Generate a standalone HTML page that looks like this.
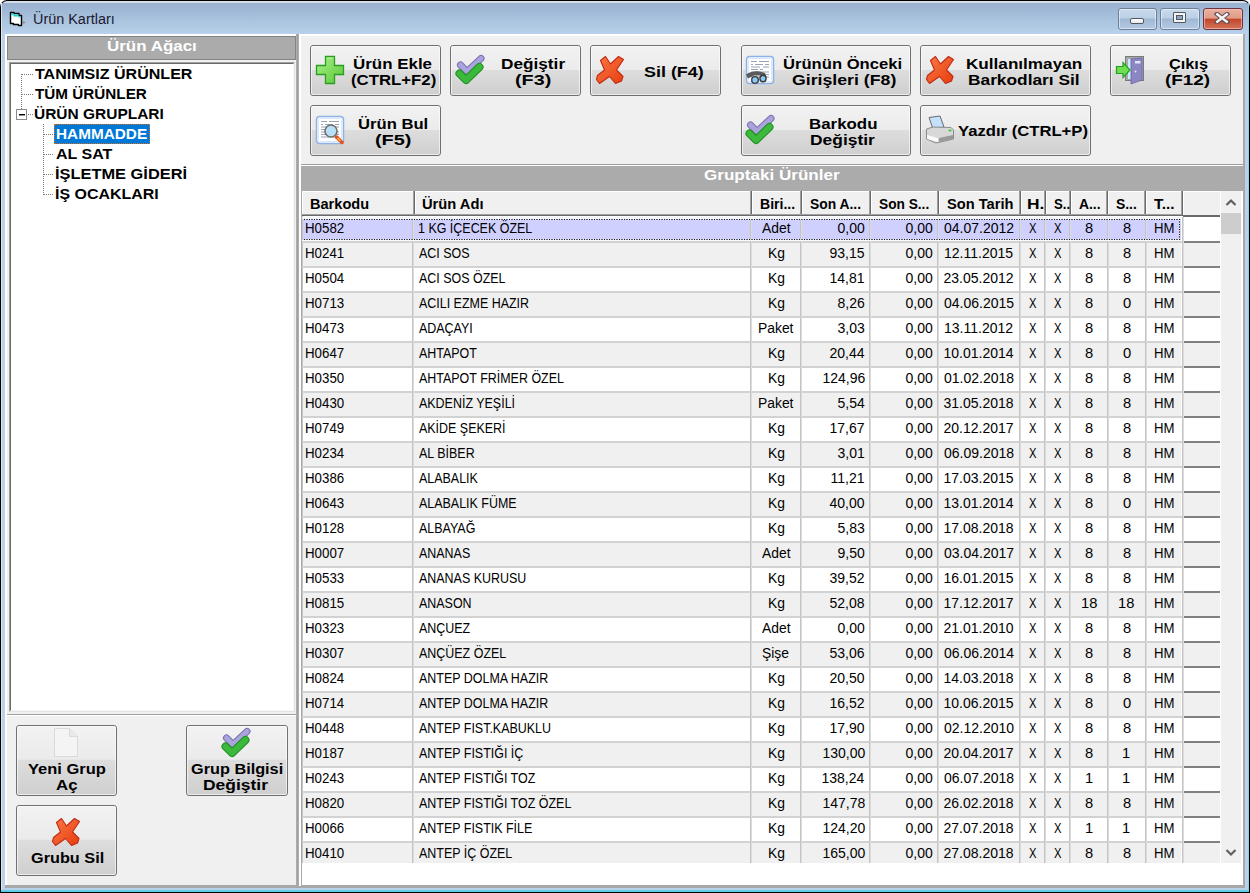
<!DOCTYPE html>
<html><head><meta charset="utf-8"><style>
*{box-sizing:border-box}
html,body{margin:0;padding:0;width:1250px;height:893px;overflow:hidden;background:#fff;font-family:"Liberation Sans",sans-serif}
.a{position:absolute}
.t{position:absolute;white-space:nowrap;line-height:12px;font-size:12px}
.b{font-weight:bold}
.sx{display:inline-block;transform-origin:0 0}
.btn{position:absolute;border:1px solid #707070;border-radius:3px;background:linear-gradient(#f2f2f2 0%,#ebebeb 48%,#dddddd 50%,#cfcfcf 100%)}
.btn::after{content:"";position:absolute;left:0;top:0;right:0;bottom:0;border:1px solid rgba(255,255,255,0.6);border-radius:2px}
.cell{position:absolute;white-space:nowrap;font-size:12px;line-height:12px;color:#000}
.cell span{display:inline-block}
</style></head><body>

<div class="a" style="left:0;top:0;width:1250px;height:893px;background:#000;border-radius:7px 7px 0 0"></div>
<div class="a" style="left:1px;top:1px;width:1248px;height:891px;background:linear-gradient(#d4dde8 0,#d4dde8 2px,#97b1cf 2px,#b9d1ea 33px,#b9d1ea 100%);border-radius:6px 6px 0 0"></div>
<div class="a" style="left:1px;top:3px;width:1px;height:888px;background:#dce7f2"></div>
<div class="a" style="left:1248px;top:3px;width:1px;height:888px;background:#8fcde6"></div>
<div class="a" style="left:1px;top:890px;width:1248px;height:2px;background:#5ccfe4"></div>
<svg class="a" style="left:0;top:0" width="30" height="30" viewBox="0 0 30 30">
<path d="M10.5 12.5 H14 V13.5 H19 V15.5 H21.5 V25.5 H18.5 V24.5 H13.5 V23.5 H10.5 Z" fill="#fff" stroke="#000" stroke-width="1.4" stroke-linejoin="round"/>
<path d="M11.2 13.2 H13.5 V14.5 H18.5 V16.2 H20.8 V17.6 H18.5 V16.6 H13.5 V15.3 H11.2 Z" fill="#10d4d4"/>
<path d="M22.5 21 L26 22.5 L22.5 24 Z" fill="#8a8a8a"/>
</svg>
<div class="t" style="left:33px;top:9px;font-size:15.5px;line-height:20px;color:#201830;transform:scaleX(0.93);transform-origin:0 0">Ürün Kartları</div>
<div class="a" style="left:1118px;top:8px;width:39px;height:22px;border:1px solid #6b7f98;border-radius:3px;background:linear-gradient(#c8d9ec 0%,#bcd0e6 45%,#9fb8d4 50%,#b4cae2 100%);box-shadow:inset 0 0 0 1px rgba(255,255,255,0.5)"></div>
<div class="a" style="left:1130px;top:18px;width:14px;height:6px;border:1px solid #505866;border-radius:2px;background:linear-gradient(#fff,#e8e8e8)"></div>
<div class="a" style="left:1160px;top:8px;width:40px;height:22px;border:1px solid #6b7f98;border-radius:3px;background:linear-gradient(#c8d9ec 0%,#bcd0e6 45%,#9fb8d4 50%,#b4cae2 100%);box-shadow:inset 0 0 0 1px rgba(255,255,255,0.5)"></div>
<div class="a" style="left:1173px;top:12px;width:13px;height:11px;border:1px solid #505866;border-radius:1px;background:#f4f4f4"></div>
<div class="a" style="left:1176px;top:15px;width:7px;height:5px;border:1px solid #505866;background:#8fa4c0"></div>
<div class="a" style="left:1203px;top:8px;width:40px;height:22px;border:1px solid #6b3240;border-radius:3px;background:linear-gradient(#eab0a0 0%,#e19c88 45%,#c4462a 52%,#d2765c 100%);box-shadow:inset 0 0 0 1px rgba(255,200,190,0.6)"></div>
<svg class="a" style="left:1214px;top:12px" width="16" height="12" viewBox="0 0 16 12"><path d="M3 2 L13 10 M13 2 L3 10" stroke="#5a4a52" stroke-width="4.4" stroke-linecap="square"/><path d="M3.2 2.2 L12.8 9.8 M12.8 2.2 L3.2 9.8" stroke="#f6f6f6" stroke-width="2.4" stroke-linecap="square"/></svg>
<div class="a" style="left:5px;top:34px;width:1240px;height:854px;background:#f0f0f0"></div>
<div class="a" style="left:5px;top:34px;width:1240px;height:2px;background:#fff"></div>
<div class="a" style="left:5px;top:34px;width:2px;height:852px;background:#fff"></div>
<div class="a" style="left:5px;top:885px;width:1240px;height:3px;background:#a8a8a8"></div>
<div class="a" style="left:1243px;top:34px;width:2px;height:854px;background:#a8a8a8"></div>
<div class="a" style="left:296px;top:34px;width:3px;height:852px;background:linear-gradient(90deg,#b4b4b4,#a0a0a0 50%,#b4b4b4)"></div>
<div class="a" style="left:299px;top:34px;width:2px;height:852px;background:#fff"></div>
<div class="a" style="left:7px;top:36px;width:289px;height:24px;background:#ababab;border:1px solid #838383"></div>
<div class="a" style="left:9px;top:62px;width:286px;height:650px;background:#fff;border-style:solid;border-width:2px;border-color:#a0a0a0 #e3e3e3 #e3e3e3 #a0a0a0"></div>
<div class="a" style="left:10px;top:63px;width:284px;height:648px;border-style:solid;border-width:1px;border-color:#696969 #f8f8f8 #f8f8f8 #696969"></div>
<div class="a" style="left:7px;top:714px;width:289px;height:1px;background:#a0a0a0"></div>
<div class="a" style="left:7px;top:715px;width:289px;height:1px;background:#fff"></div>
<div class="a" style="left:21px;top:74px;width:1px;height:35px;background:repeating-linear-gradient(180deg,#7a7a7a 0 1px,transparent 1px 2px)"></div>
<div class="a" style="left:22px;top:74px;width:11px;height:1px;background:repeating-linear-gradient(90deg,#7a7a7a 0 1px,transparent 1px 2px)"></div>
<div class="a" style="left:22px;top:94px;width:11px;height:1px;background:repeating-linear-gradient(90deg,#7a7a7a 0 1px,transparent 1px 2px)"></div>
<div class="a" style="left:28px;top:114px;width:5px;height:1px;background:repeating-linear-gradient(90deg,#7a7a7a 0 1px,transparent 1px 2px)"></div>
<div class="a" style="left:16px;top:109px;width:11px;height:11px;border:1px solid #8a8a8a;background:#fff"></div>
<div class="a" style="left:19px;top:114px;width:6px;height:1px;background:#000"></div>
<div class="a" style="left:19px;top:115px;width:6px;height:1px;background:#909090"></div>
<div class="a" style="left:43px;top:124px;width:1px;height:72px;background:repeating-linear-gradient(180deg,#7a7a7a 0 1px,transparent 1px 2px)"></div>
<div class="a" style="left:44px;top:134px;width:10px;height:1px;background:repeating-linear-gradient(90deg,#7a7a7a 0 1px,transparent 1px 2px)"></div>
<div class="a" style="left:44px;top:154px;width:10px;height:1px;background:repeating-linear-gradient(90deg,#7a7a7a 0 1px,transparent 1px 2px)"></div>
<div class="a" style="left:44px;top:174px;width:10px;height:1px;background:repeating-linear-gradient(90deg,#7a7a7a 0 1px,transparent 1px 2px)"></div>
<div class="a" style="left:44px;top:194px;width:10px;height:1px;background:repeating-linear-gradient(90deg,#7a7a7a 0 1px,transparent 1px 2px)"></div>
<div class="a" style="left:54px;top:124px;width:96px;height:20px;background:#0078d7;border:1px dotted #d07020"></div>
<div class="btn" style="left:310px;top:45px;width:131px;height:51px"></div>
<div class="btn" style="left:450px;top:45px;width:131px;height:51px"></div>
<div class="btn" style="left:590px;top:45px;width:131px;height:51px"></div>
<div class="btn" style="left:741px;top:45px;width:170px;height:51px"></div>
<div class="btn" style="left:920px;top:45px;width:171px;height:51px"></div>
<div class="btn" style="left:1110px;top:45px;width:121px;height:51px"></div>
<div class="btn" style="left:310px;top:105px;width:131px;height:51px"></div>
<div class="btn" style="left:741px;top:105px;width:170px;height:51px"></div>
<div class="btn" style="left:920px;top:105px;width:171px;height:51px"></div>
<div class="btn" style="left:16px;top:725px;width:101px;height:71px"></div>
<div class="btn" style="left:186px;top:725px;width:102px;height:71px"></div>
<div class="btn" style="left:16px;top:805px;width:101px;height:71px"></div>
<svg class="a" style="left:312px;top:52px" width="36" height="36" viewBox="0 0 36 36"><defs><linearGradient id="gp" x1="0" y1="0" x2="1" y2="1"><stop offset="0" stop-color="#a8f088"/><stop offset="1" stop-color="#5cc838"/></linearGradient></defs>
<path d="M13.5 4.5h9v9h9v9h-9v9h-9v-9h-9v-9h9z" fill="url(#gp)" stroke="#2a9e22" stroke-width="1.3"/>
<path d="M15 6h6" stroke="#b8f8a0" stroke-width="1"/></svg>
<svg class="a" style="left:452px;top:52px" width="36" height="36" viewBox="0 0 36 36"><path d="M8.5 13 L15 19.5 L29 6.5" fill="none" stroke="#7a70b0" stroke-width="7" stroke-linecap="round" stroke-linejoin="round"/>
<path d="M8.5 13 L15 19.5 L29 6.5" fill="none" stroke="#aaa4dc" stroke-width="5" stroke-linecap="round" stroke-linejoin="round"/>
<path d="M7.5 21.5 L14 28 L27.5 15" fill="none" stroke="#1e8e1e" stroke-width="8" stroke-linecap="round" stroke-linejoin="round"/>
<path d="M7.5 21.5 L14 28 L27.5 15" fill="none" stroke="#3cb83c" stroke-width="6" stroke-linecap="round" stroke-linejoin="round"/></svg>
<svg class="a" style="left:592px;top:52px" width="36" height="36" viewBox="0 0 36 36"><defs><linearGradient id="gx" x1="0" y1="0" x2="1" y2="1"><stop offset="0" stop-color="#fc7a48"/><stop offset="1" stop-color="#e63c0c"/></linearGradient></defs>
<path d="M8.5 8.5 L13.5 4.5 L18.5 12 L26.5 4.5 L31.5 7.5 L24.5 18 L31 24.5 L29.5 29 L23.5 31.5 L17.5 24.5 L7.5 31.5 L4.5 27.5 L5.5 23.5 L12.5 18 Z" fill="url(#gx)" stroke="#c02a10" stroke-width="1.1" stroke-linejoin="round"/></svg>
<svg class="a" style="left:742px;top:52px" width="36" height="36" viewBox="0 0 36 36"><rect x="4.5" y="4.5" width="27" height="27" rx="3" fill="#f8fbff" stroke="#8fb2e6" stroke-width="1.5"/>
<rect x="6.5" y="6.5" width="23" height="23" rx="1" fill="#fff" stroke="#d8e8fa" stroke-width="1"/>
<g stroke="#9aa4b4" stroke-width="1.2"><path d="M9 9.5h6M17 9.5h10M9 12.5h2M13 12.5h8M23 12.5h4M9 15h9M21 15h6M9 17.5h7M18 17.5h3M9 20h18M9 22.5h18M9 25h18"/></g><path d="M4 22.5 Q10 18.5 18 19.5 L23 21 L24.5 25 L20 23.5 L12 23.5 L6 26.5 Z" fill="#5a5a5a"/>
<ellipse cx="13" cy="28" rx="3.3" ry="3.4" fill="#8cc8f4" stroke="#3a3a3a" stroke-width="1.4"/>
<ellipse cx="21" cy="26.5" rx="3.1" ry="3.2" fill="#8cc8f4" stroke="#3a3a3a" stroke-width="1.4"/></svg>
<svg class="a" style="left:922px;top:52px" width="36" height="36" viewBox="0 0 36 36"><defs><linearGradient id="gx" x1="0" y1="0" x2="1" y2="1"><stop offset="0" stop-color="#fc7a48"/><stop offset="1" stop-color="#e63c0c"/></linearGradient></defs>
<path d="M8.5 8.5 L13.5 4.5 L18.5 12 L26.5 4.5 L31.5 7.5 L24.5 18 L31 24.5 L29.5 29 L23.5 31.5 L17.5 24.5 L7.5 31.5 L4.5 27.5 L5.5 23.5 L12.5 18 Z" fill="url(#gx)" stroke="#c02a10" stroke-width="1.1" stroke-linejoin="round"/></svg>
<svg class="a" style="left:1112px;top:52px" width="36" height="36" viewBox="0 0 36 36"><rect x="13.5" y="4.5" width="18" height="24" fill="#a8a8a8" stroke="#7a7a7a" stroke-width="1"/>
<rect x="16" y="7" width="4" height="20" fill="#c8ecfc"/>
<path d="M19 7 L30 6 L30 28 L19 32 Z" fill="#8c86c4" stroke="#6a64a4" stroke-width="0.8"/>
<rect x="23" y="9" width="5.5" height="2.5" fill="#e0e0fc"/>
<circle cx="23.5" cy="19.5" r="1" fill="#e8e8e8"/>
<path d="M4.5 14.5 H11 V10.5 L18 18 L11 25.5 V21.5 H4.5 Z" fill="#6ee050" stroke="#20a020" stroke-width="1.2"/></svg>
<svg class="a" style="left:312px;top:112px" width="36" height="36" viewBox="0 0 36 36"><rect x="4.5" y="4.5" width="27" height="27" rx="3" fill="#f8fbff" stroke="#8fb2e6" stroke-width="1.5"/>
<rect x="6.5" y="6.5" width="23" height="23" rx="1" fill="#fff" stroke="#d8e8fa" stroke-width="1"/>
<g stroke="#9aa4b4" stroke-width="1.2"><path d="M9 9.5h6M17 9.5h10M9 12.5h2M13 12.5h8M23 12.5h4M9 15h9M21 15h6M9 17.5h7M18 17.5h3M9 20h18M9 22.5h18M9 25h18"/></g><circle cx="19" cy="19" r="6" fill="#b8e0f8" stroke="#707070" stroke-width="1.6"/>
<path d="M24.5 25 L30 30.5" stroke="#e8501c" stroke-width="3.5" stroke-linecap="round"/>
<path d="M25.5 26 L28.5 29" stroke="#ffc040" stroke-width="1.5"/></svg>
<svg class="a" style="left:742px;top:112px" width="36" height="36" viewBox="0 0 36 36"><path d="M8.5 13 L15 19.5 L29 6.5" fill="none" stroke="#7a70b0" stroke-width="7" stroke-linecap="round" stroke-linejoin="round"/>
<path d="M8.5 13 L15 19.5 L29 6.5" fill="none" stroke="#aaa4dc" stroke-width="5" stroke-linecap="round" stroke-linejoin="round"/>
<path d="M7.5 21.5 L14 28 L27.5 15" fill="none" stroke="#1e8e1e" stroke-width="8" stroke-linecap="round" stroke-linejoin="round"/>
<path d="M7.5 21.5 L14 28 L27.5 15" fill="none" stroke="#3cb83c" stroke-width="6" stroke-linecap="round" stroke-linejoin="round"/></svg>
<svg class="a" style="left:922px;top:112px" width="36" height="36" viewBox="0 0 36 36"><path d="M7 5.5 L18 4 L22 15 L11 17 Z" fill="#c4e0fa" stroke="#6a6a6a" stroke-width="1"/>
<path d="M4.5 17 L11 15 L29 15.5 L31.5 18 L31.5 27 L14 31 L4.5 27 Z" fill="#d8d8d8" stroke="#8a8a8a" stroke-width="1"/>
<path d="M5 23 L16 26 L16 30 L5 27 Z" fill="#fafafa"/>
<path d="M17 26 L31 23 L31 27 L17 30 Z" fill="#9a9a9a"/>
<ellipse cx="28" cy="18.5" rx="1.6" ry="1.1" fill="#30d030"/></svg>
<svg class="a" style="left:48px;top:725px" width="36" height="36" viewBox="0 0 36 36"><path d="M6.5 3.5 H21.5 L29.5 11.5 V31.5 H6.5 Z" fill="#f4f4f4" stroke="#dadada" stroke-width="1"/>
<path d="M21.5 3.5 V11.5 H29.5" fill="#eaeaea" stroke="#dadada" stroke-width="1"/></svg>
<svg class="a" style="left:218px;top:725px" width="36" height="36" viewBox="0 0 36 36"><path d="M8.5 13 L15 19.5 L29 6.5" fill="none" stroke="#7a70b0" stroke-width="7" stroke-linecap="round" stroke-linejoin="round"/>
<path d="M8.5 13 L15 19.5 L29 6.5" fill="none" stroke="#aaa4dc" stroke-width="5" stroke-linecap="round" stroke-linejoin="round"/>
<path d="M7.5 21.5 L14 28 L27.5 15" fill="none" stroke="#1e8e1e" stroke-width="8" stroke-linecap="round" stroke-linejoin="round"/>
<path d="M7.5 21.5 L14 28 L27.5 15" fill="none" stroke="#3cb83c" stroke-width="6" stroke-linecap="round" stroke-linejoin="round"/></svg>
<svg class="a" style="left:48px;top:814px" width="36" height="36" viewBox="0 0 36 36"><defs><linearGradient id="gx" x1="0" y1="0" x2="1" y2="1"><stop offset="0" stop-color="#fc7a48"/><stop offset="1" stop-color="#e63c0c"/></linearGradient></defs>
<path d="M8.5 8.5 L13.5 4.5 L18.5 12 L26.5 4.5 L31.5 7.5 L24.5 18 L31 24.5 L29.5 29 L23.5 31.5 L17.5 24.5 L7.5 31.5 L4.5 27.5 L5.5 23.5 L12.5 18 Z" fill="url(#gx)" stroke="#c02a10" stroke-width="1.1" stroke-linejoin="round"/></svg>
<div class="a" style="left:301px;top:164px;width:942px;height:1px;background:#a0a0a0"></div>
<div class="a" style="left:301px;top:165px;width:942px;height:1px;background:#fff"></div>
<div class="a" style="left:301px;top:166px;width:942px;height:25px;background:#ababab"></div>
<div class="a" style="left:301px;top:191px;width:942px;height:694px;background:#fff"></div>
<div class="a" style="left:301px;top:191px;width:1px;height:694px;background:#a8a8a8"></div>
<div class="a" style="left:302px;top:216px;width:1px;height:647px;background:#c4c4c4"></div>
<div class="a" style="left:302px;top:191px;width:113px;height:25px;background:#f0f0f0;border-style:solid;border-width:1px 0 0 1px;border-color:#fff"></div>
<div class="a" style="left:413px;top:191px;width:1px;height:24px;background:#a0a0a0"></div>
<div class="a" style="left:414px;top:191px;width:1px;height:25px;background:#696969"></div>
<div class="a" style="left:415px;top:191px;width:337px;height:25px;background:#f0f0f0;border-style:solid;border-width:1px 0 0 1px;border-color:#fff"></div>
<div class="a" style="left:750px;top:191px;width:1px;height:24px;background:#a0a0a0"></div>
<div class="a" style="left:751px;top:191px;width:1px;height:25px;background:#696969"></div>
<div class="a" style="left:752px;top:191px;width:50px;height:25px;background:#f0f0f0;border-style:solid;border-width:1px 0 0 1px;border-color:#fff"></div>
<div class="a" style="left:800px;top:191px;width:1px;height:24px;background:#a0a0a0"></div>
<div class="a" style="left:801px;top:191px;width:1px;height:25px;background:#696969"></div>
<div class="a" style="left:802px;top:191px;width:69px;height:25px;background:#f0f0f0;border-style:solid;border-width:1px 0 0 1px;border-color:#fff"></div>
<div class="a" style="left:869px;top:191px;width:1px;height:24px;background:#a0a0a0"></div>
<div class="a" style="left:870px;top:191px;width:1px;height:25px;background:#696969"></div>
<div class="a" style="left:871px;top:191px;width:68px;height:25px;background:#f0f0f0;border-style:solid;border-width:1px 0 0 1px;border-color:#fff"></div>
<div class="a" style="left:937px;top:191px;width:1px;height:24px;background:#a0a0a0"></div>
<div class="a" style="left:938px;top:191px;width:1px;height:25px;background:#696969"></div>
<div class="a" style="left:939px;top:191px;width:82px;height:25px;background:#f0f0f0;border-style:solid;border-width:1px 0 0 1px;border-color:#fff"></div>
<div class="a" style="left:1019px;top:191px;width:1px;height:24px;background:#a0a0a0"></div>
<div class="a" style="left:1020px;top:191px;width:1px;height:25px;background:#696969"></div>
<div class="a" style="left:1021px;top:191px;width:25px;height:25px;background:#f0f0f0;border-style:solid;border-width:1px 0 0 1px;border-color:#fff"></div>
<div class="a" style="left:1044px;top:191px;width:1px;height:24px;background:#a0a0a0"></div>
<div class="a" style="left:1045px;top:191px;width:1px;height:25px;background:#696969"></div>
<div class="a" style="left:1046px;top:191px;width:25px;height:25px;background:#f0f0f0;border-style:solid;border-width:1px 0 0 1px;border-color:#fff"></div>
<div class="a" style="left:1069px;top:191px;width:1px;height:24px;background:#a0a0a0"></div>
<div class="a" style="left:1070px;top:191px;width:1px;height:25px;background:#696969"></div>
<div class="a" style="left:1071px;top:191px;width:37px;height:25px;background:#f0f0f0;border-style:solid;border-width:1px 0 0 1px;border-color:#fff"></div>
<div class="a" style="left:1106px;top:191px;width:1px;height:24px;background:#a0a0a0"></div>
<div class="a" style="left:1107px;top:191px;width:1px;height:25px;background:#696969"></div>
<div class="a" style="left:1108px;top:191px;width:38px;height:25px;background:#f0f0f0;border-style:solid;border-width:1px 0 0 1px;border-color:#fff"></div>
<div class="a" style="left:1144px;top:191px;width:1px;height:24px;background:#a0a0a0"></div>
<div class="a" style="left:1145px;top:191px;width:1px;height:25px;background:#696969"></div>
<div class="a" style="left:1146px;top:191px;width:37px;height:25px;background:#f0f0f0;border-style:solid;border-width:1px 0 0 1px;border-color:#fff"></div>
<div class="a" style="left:1181px;top:191px;width:1px;height:24px;background:#a0a0a0"></div>
<div class="a" style="left:1182px;top:191px;width:1px;height:25px;background:#696969"></div>
<div class="a" style="left:1183px;top:191px;width:37px;height:25px;background:#f0f0f0;border-style:solid;border-width:1px 0 0 1px;border-color:#fff"></div>
<div class="a" style="left:302px;top:214px;width:880px;height:1px;background:#a0a0a0"></div>
<div class="a" style="left:302px;top:215px;width:918px;height:1px;background:#696969"></div>
<div class="a" style="left:1183px;top:216px;width:37px;height:1px;background:#696969"></div>
<div class="a" style="left:303px;top:217px;width:878px;height:24px;background:#d0d0ff"></div>
<div class="a" style="left:1183px;top:217px;width:37px;height:24px;background:#fff"></div>
<div class="a" style="left:302px;top:241px;width:880px;height:2px;background:#d2d2d2"></div>
<div class="a" style="left:1183px;top:241px;width:37px;height:2px;background:#808080"></div>
<div class="t" style="left:305.05px;top:218px;line-height:20px;font-size:14px;color:#000;transform:scaleX(0.95);transform-origin:0 0">H0582</div>
<div class="t" style="left:418.11px;top:218px;line-height:20px;font-size:14px;color:#000;transform:scaleX(0.89);transform-origin:0 0">1 KG İÇECEK ÖZEL</div>
<div class="t" style="left:761.64px;top:218px;line-height:20px;font-size:14px;color:#000;transform:scaleX(0.99);transform-origin:0 0">Adet</div>
<div class="t" style="left:837.50px;top:218px;line-height:20px;font-size:14px;color:#000;transform:scaleX(1.0);transform-origin:0 0">0,00</div>
<div class="t" style="left:905.50px;top:218px;line-height:20px;font-size:14px;color:#000;transform:scaleX(1.0);transform-origin:0 0">0,00</div>
<div class="t" style="left:944.00px;top:218px;line-height:20px;font-size:14px;color:#000;transform:scaleX(1.0);transform-origin:0 0">04.07.2012</div>
<div class="t" style="left:1028.90px;top:218px;line-height:20px;font-size:14px;color:#000;transform:scaleX(0.8);transform-origin:0 0">X</div>
<div class="t" style="left:1053.90px;top:218px;line-height:20px;font-size:14px;color:#000;transform:scaleX(0.8);transform-origin:0 0">X</div>
<div class="t" style="left:1085.33px;top:218px;line-height:20px;font-size:14px;color:#000;transform:scaleX(1.05);transform-origin:0 0">8</div>
<div class="t" style="left:1122.83px;top:218px;line-height:20px;font-size:14px;color:#000;transform:scaleX(1.05);transform-origin:0 0">8</div>
<div class="t" style="left:1153.66px;top:218px;line-height:20px;font-size:14px;color:#000;transform:scaleX(0.94);transform-origin:0 0">HM</div>
<div class="a" style="left:303px;top:243px;width:878px;height:23px;background:#f0f0f0"></div>
<div class="a" style="left:1183px;top:243px;width:37px;height:23px;background:#f0f0f0"></div>
<div class="a" style="left:302px;top:266px;width:880px;height:2px;background:#d2d2d2"></div>
<div class="a" style="left:1183px;top:266px;width:37px;height:2px;background:#808080"></div>
<div class="t" style="left:305.05px;top:243px;line-height:20px;font-size:14px;color:#000;transform:scaleX(0.95);transform-origin:0 0">H0241</div>
<div class="t" style="left:419.00px;top:243px;line-height:20px;font-size:14px;color:#000;transform:scaleX(0.89);transform-origin:0 0">ACI SOS</div>
<div class="t" style="left:767.59px;top:243px;line-height:20px;font-size:14px;color:#000;transform:scaleX(0.99);transform-origin:0 0">Kg</div>
<div class="t" style="left:829.50px;top:243px;line-height:20px;font-size:14px;color:#000;transform:scaleX(1.0);transform-origin:0 0">93,15</div>
<div class="t" style="left:905.50px;top:243px;line-height:20px;font-size:14px;color:#000;transform:scaleX(1.0);transform-origin:0 0">0,00</div>
<div class="t" style="left:944.00px;top:243px;line-height:20px;font-size:14px;color:#000;transform:scaleX(1.0);transform-origin:0 0">12.11.2015</div>
<div class="t" style="left:1028.90px;top:243px;line-height:20px;font-size:14px;color:#000;transform:scaleX(0.8);transform-origin:0 0">X</div>
<div class="t" style="left:1053.90px;top:243px;line-height:20px;font-size:14px;color:#000;transform:scaleX(0.8);transform-origin:0 0">X</div>
<div class="t" style="left:1085.33px;top:243px;line-height:20px;font-size:14px;color:#000;transform:scaleX(1.05);transform-origin:0 0">8</div>
<div class="t" style="left:1122.83px;top:243px;line-height:20px;font-size:14px;color:#000;transform:scaleX(1.05);transform-origin:0 0">8</div>
<div class="t" style="left:1153.66px;top:243px;line-height:20px;font-size:14px;color:#000;transform:scaleX(0.94);transform-origin:0 0">HM</div>
<div class="a" style="left:303px;top:268px;width:878px;height:23px;background:#ffffff"></div>
<div class="a" style="left:1183px;top:268px;width:37px;height:23px;background:#fff"></div>
<div class="a" style="left:302px;top:291px;width:880px;height:2px;background:#d2d2d2"></div>
<div class="a" style="left:1183px;top:291px;width:37px;height:2px;background:#808080"></div>
<div class="t" style="left:305.05px;top:268px;line-height:20px;font-size:14px;color:#000;transform:scaleX(0.95);transform-origin:0 0">H0504</div>
<div class="t" style="left:419.00px;top:268px;line-height:20px;font-size:14px;color:#000;transform:scaleX(0.89);transform-origin:0 0">ACI SOS ÖZEL</div>
<div class="t" style="left:767.59px;top:268px;line-height:20px;font-size:14px;color:#000;transform:scaleX(0.99);transform-origin:0 0">Kg</div>
<div class="t" style="left:829.50px;top:268px;line-height:20px;font-size:14px;color:#000;transform:scaleX(1.0);transform-origin:0 0">14,81</div>
<div class="t" style="left:905.50px;top:268px;line-height:20px;font-size:14px;color:#000;transform:scaleX(1.0);transform-origin:0 0">0,00</div>
<div class="t" style="left:943.50px;top:268px;line-height:20px;font-size:14px;color:#000;transform:scaleX(1.0);transform-origin:0 0">23.05.2012</div>
<div class="t" style="left:1028.90px;top:268px;line-height:20px;font-size:14px;color:#000;transform:scaleX(0.8);transform-origin:0 0">X</div>
<div class="t" style="left:1053.90px;top:268px;line-height:20px;font-size:14px;color:#000;transform:scaleX(0.8);transform-origin:0 0">X</div>
<div class="t" style="left:1085.33px;top:268px;line-height:20px;font-size:14px;color:#000;transform:scaleX(1.05);transform-origin:0 0">8</div>
<div class="t" style="left:1122.83px;top:268px;line-height:20px;font-size:14px;color:#000;transform:scaleX(1.05);transform-origin:0 0">8</div>
<div class="t" style="left:1153.66px;top:268px;line-height:20px;font-size:14px;color:#000;transform:scaleX(0.94);transform-origin:0 0">HM</div>
<div class="a" style="left:303px;top:293px;width:878px;height:23px;background:#f0f0f0"></div>
<div class="a" style="left:1183px;top:293px;width:37px;height:23px;background:#f0f0f0"></div>
<div class="a" style="left:302px;top:316px;width:880px;height:2px;background:#d2d2d2"></div>
<div class="a" style="left:1183px;top:316px;width:37px;height:2px;background:#808080"></div>
<div class="t" style="left:305.05px;top:293px;line-height:20px;font-size:14px;color:#000;transform:scaleX(0.95);transform-origin:0 0">H0713</div>
<div class="t" style="left:419.00px;top:293px;line-height:20px;font-size:14px;color:#000;transform:scaleX(0.89);transform-origin:0 0">ACILI EZME HAZIR</div>
<div class="t" style="left:767.59px;top:293px;line-height:20px;font-size:14px;color:#000;transform:scaleX(0.99);transform-origin:0 0">Kg</div>
<div class="t" style="left:837.50px;top:293px;line-height:20px;font-size:14px;color:#000;transform:scaleX(1.0);transform-origin:0 0">8,26</div>
<div class="t" style="left:905.50px;top:293px;line-height:20px;font-size:14px;color:#000;transform:scaleX(1.0);transform-origin:0 0">0,00</div>
<div class="t" style="left:944.00px;top:293px;line-height:20px;font-size:14px;color:#000;transform:scaleX(1.0);transform-origin:0 0">04.06.2015</div>
<div class="t" style="left:1028.90px;top:293px;line-height:20px;font-size:14px;color:#000;transform:scaleX(0.8);transform-origin:0 0">X</div>
<div class="t" style="left:1053.90px;top:293px;line-height:20px;font-size:14px;color:#000;transform:scaleX(0.8);transform-origin:0 0">X</div>
<div class="t" style="left:1085.33px;top:293px;line-height:20px;font-size:14px;color:#000;transform:scaleX(1.05);transform-origin:0 0">8</div>
<div class="t" style="left:1122.83px;top:293px;line-height:20px;font-size:14px;color:#000;transform:scaleX(1.05);transform-origin:0 0">0</div>
<div class="t" style="left:1153.66px;top:293px;line-height:20px;font-size:14px;color:#000;transform:scaleX(0.94);transform-origin:0 0">HM</div>
<div class="a" style="left:303px;top:318px;width:878px;height:23px;background:#ffffff"></div>
<div class="a" style="left:1183px;top:318px;width:37px;height:23px;background:#fff"></div>
<div class="a" style="left:302px;top:341px;width:880px;height:2px;background:#d2d2d2"></div>
<div class="a" style="left:1183px;top:341px;width:37px;height:2px;background:#808080"></div>
<div class="t" style="left:305.05px;top:318px;line-height:20px;font-size:14px;color:#000;transform:scaleX(0.95);transform-origin:0 0">H0473</div>
<div class="t" style="left:419.00px;top:318px;line-height:20px;font-size:14px;color:#000;transform:scaleX(0.89);transform-origin:0 0">ADAÇAYI</div>
<div class="t" style="left:757.68px;top:318px;line-height:20px;font-size:14px;color:#000;transform:scaleX(0.99);transform-origin:0 0">Paket</div>
<div class="t" style="left:837.50px;top:318px;line-height:20px;font-size:14px;color:#000;transform:scaleX(1.0);transform-origin:0 0">3,03</div>
<div class="t" style="left:905.50px;top:318px;line-height:20px;font-size:14px;color:#000;transform:scaleX(1.0);transform-origin:0 0">0,00</div>
<div class="t" style="left:944.00px;top:318px;line-height:20px;font-size:14px;color:#000;transform:scaleX(1.0);transform-origin:0 0">13.11.2012</div>
<div class="t" style="left:1028.90px;top:318px;line-height:20px;font-size:14px;color:#000;transform:scaleX(0.8);transform-origin:0 0">X</div>
<div class="t" style="left:1053.90px;top:318px;line-height:20px;font-size:14px;color:#000;transform:scaleX(0.8);transform-origin:0 0">X</div>
<div class="t" style="left:1085.33px;top:318px;line-height:20px;font-size:14px;color:#000;transform:scaleX(1.05);transform-origin:0 0">8</div>
<div class="t" style="left:1122.83px;top:318px;line-height:20px;font-size:14px;color:#000;transform:scaleX(1.05);transform-origin:0 0">8</div>
<div class="t" style="left:1153.66px;top:318px;line-height:20px;font-size:14px;color:#000;transform:scaleX(0.94);transform-origin:0 0">HM</div>
<div class="a" style="left:303px;top:343px;width:878px;height:23px;background:#f0f0f0"></div>
<div class="a" style="left:1183px;top:343px;width:37px;height:23px;background:#f0f0f0"></div>
<div class="a" style="left:302px;top:366px;width:880px;height:2px;background:#d2d2d2"></div>
<div class="a" style="left:1183px;top:366px;width:37px;height:2px;background:#808080"></div>
<div class="t" style="left:305.05px;top:343px;line-height:20px;font-size:14px;color:#000;transform:scaleX(0.95);transform-origin:0 0">H0647</div>
<div class="t" style="left:419.00px;top:343px;line-height:20px;font-size:14px;color:#000;transform:scaleX(0.89);transform-origin:0 0">AHTAPOT</div>
<div class="t" style="left:767.59px;top:343px;line-height:20px;font-size:14px;color:#000;transform:scaleX(0.99);transform-origin:0 0">Kg</div>
<div class="t" style="left:829.50px;top:343px;line-height:20px;font-size:14px;color:#000;transform:scaleX(1.0);transform-origin:0 0">20,44</div>
<div class="t" style="left:905.50px;top:343px;line-height:20px;font-size:14px;color:#000;transform:scaleX(1.0);transform-origin:0 0">0,00</div>
<div class="t" style="left:943.50px;top:343px;line-height:20px;font-size:14px;color:#000;transform:scaleX(1.0);transform-origin:0 0">10.01.2014</div>
<div class="t" style="left:1028.90px;top:343px;line-height:20px;font-size:14px;color:#000;transform:scaleX(0.8);transform-origin:0 0">X</div>
<div class="t" style="left:1053.90px;top:343px;line-height:20px;font-size:14px;color:#000;transform:scaleX(0.8);transform-origin:0 0">X</div>
<div class="t" style="left:1085.33px;top:343px;line-height:20px;font-size:14px;color:#000;transform:scaleX(1.05);transform-origin:0 0">8</div>
<div class="t" style="left:1122.83px;top:343px;line-height:20px;font-size:14px;color:#000;transform:scaleX(1.05);transform-origin:0 0">0</div>
<div class="t" style="left:1153.66px;top:343px;line-height:20px;font-size:14px;color:#000;transform:scaleX(0.94);transform-origin:0 0">HM</div>
<div class="a" style="left:303px;top:368px;width:878px;height:23px;background:#ffffff"></div>
<div class="a" style="left:1183px;top:368px;width:37px;height:23px;background:#fff"></div>
<div class="a" style="left:302px;top:391px;width:880px;height:2px;background:#d2d2d2"></div>
<div class="a" style="left:1183px;top:391px;width:37px;height:2px;background:#808080"></div>
<div class="t" style="left:305.05px;top:368px;line-height:20px;font-size:14px;color:#000;transform:scaleX(0.95);transform-origin:0 0">H0350</div>
<div class="t" style="left:419.00px;top:368px;line-height:20px;font-size:14px;color:#000;transform:scaleX(0.89);transform-origin:0 0">AHTAPOT FRİMER ÖZEL</div>
<div class="t" style="left:767.59px;top:368px;line-height:20px;font-size:14px;color:#000;transform:scaleX(0.99);transform-origin:0 0">Kg</div>
<div class="t" style="left:822.50px;top:368px;line-height:20px;font-size:14px;color:#000;transform:scaleX(1.0);transform-origin:0 0">124,96</div>
<div class="t" style="left:905.50px;top:368px;line-height:20px;font-size:14px;color:#000;transform:scaleX(1.0);transform-origin:0 0">0,00</div>
<div class="t" style="left:944.00px;top:368px;line-height:20px;font-size:14px;color:#000;transform:scaleX(1.0);transform-origin:0 0">01.02.2018</div>
<div class="t" style="left:1028.90px;top:368px;line-height:20px;font-size:14px;color:#000;transform:scaleX(0.8);transform-origin:0 0">X</div>
<div class="t" style="left:1053.90px;top:368px;line-height:20px;font-size:14px;color:#000;transform:scaleX(0.8);transform-origin:0 0">X</div>
<div class="t" style="left:1085.33px;top:368px;line-height:20px;font-size:14px;color:#000;transform:scaleX(1.05);transform-origin:0 0">8</div>
<div class="t" style="left:1122.83px;top:368px;line-height:20px;font-size:14px;color:#000;transform:scaleX(1.05);transform-origin:0 0">8</div>
<div class="t" style="left:1153.66px;top:368px;line-height:20px;font-size:14px;color:#000;transform:scaleX(0.94);transform-origin:0 0">HM</div>
<div class="a" style="left:303px;top:393px;width:878px;height:23px;background:#f0f0f0"></div>
<div class="a" style="left:1183px;top:393px;width:37px;height:23px;background:#f0f0f0"></div>
<div class="a" style="left:302px;top:416px;width:880px;height:2px;background:#d2d2d2"></div>
<div class="a" style="left:1183px;top:416px;width:37px;height:2px;background:#808080"></div>
<div class="t" style="left:305.05px;top:393px;line-height:20px;font-size:14px;color:#000;transform:scaleX(0.95);transform-origin:0 0">H0430</div>
<div class="t" style="left:419.00px;top:393px;line-height:20px;font-size:14px;color:#000;transform:scaleX(0.89);transform-origin:0 0">AKDENİZ YEŞİLİ</div>
<div class="t" style="left:757.68px;top:393px;line-height:20px;font-size:14px;color:#000;transform:scaleX(0.99);transform-origin:0 0">Paket</div>
<div class="t" style="left:837.50px;top:393px;line-height:20px;font-size:14px;color:#000;transform:scaleX(1.0);transform-origin:0 0">5,54</div>
<div class="t" style="left:905.50px;top:393px;line-height:20px;font-size:14px;color:#000;transform:scaleX(1.0);transform-origin:0 0">0,00</div>
<div class="t" style="left:943.50px;top:393px;line-height:20px;font-size:14px;color:#000;transform:scaleX(1.0);transform-origin:0 0">31.05.2018</div>
<div class="t" style="left:1028.90px;top:393px;line-height:20px;font-size:14px;color:#000;transform:scaleX(0.8);transform-origin:0 0">X</div>
<div class="t" style="left:1053.90px;top:393px;line-height:20px;font-size:14px;color:#000;transform:scaleX(0.8);transform-origin:0 0">X</div>
<div class="t" style="left:1085.33px;top:393px;line-height:20px;font-size:14px;color:#000;transform:scaleX(1.05);transform-origin:0 0">8</div>
<div class="t" style="left:1122.83px;top:393px;line-height:20px;font-size:14px;color:#000;transform:scaleX(1.05);transform-origin:0 0">8</div>
<div class="t" style="left:1153.66px;top:393px;line-height:20px;font-size:14px;color:#000;transform:scaleX(0.94);transform-origin:0 0">HM</div>
<div class="a" style="left:303px;top:418px;width:878px;height:23px;background:#ffffff"></div>
<div class="a" style="left:1183px;top:418px;width:37px;height:23px;background:#fff"></div>
<div class="a" style="left:302px;top:441px;width:880px;height:2px;background:#d2d2d2"></div>
<div class="a" style="left:1183px;top:441px;width:37px;height:2px;background:#808080"></div>
<div class="t" style="left:305.05px;top:418px;line-height:20px;font-size:14px;color:#000;transform:scaleX(0.95);transform-origin:0 0">H0749</div>
<div class="t" style="left:419.00px;top:418px;line-height:20px;font-size:14px;color:#000;transform:scaleX(0.89);transform-origin:0 0">AKİDE ŞEKERİ</div>
<div class="t" style="left:767.59px;top:418px;line-height:20px;font-size:14px;color:#000;transform:scaleX(0.99);transform-origin:0 0">Kg</div>
<div class="t" style="left:829.50px;top:418px;line-height:20px;font-size:14px;color:#000;transform:scaleX(1.0);transform-origin:0 0">17,67</div>
<div class="t" style="left:905.50px;top:418px;line-height:20px;font-size:14px;color:#000;transform:scaleX(1.0);transform-origin:0 0">0,00</div>
<div class="t" style="left:943.50px;top:418px;line-height:20px;font-size:14px;color:#000;transform:scaleX(1.0);transform-origin:0 0">20.12.2017</div>
<div class="t" style="left:1028.90px;top:418px;line-height:20px;font-size:14px;color:#000;transform:scaleX(0.8);transform-origin:0 0">X</div>
<div class="t" style="left:1053.90px;top:418px;line-height:20px;font-size:14px;color:#000;transform:scaleX(0.8);transform-origin:0 0">X</div>
<div class="t" style="left:1085.33px;top:418px;line-height:20px;font-size:14px;color:#000;transform:scaleX(1.05);transform-origin:0 0">8</div>
<div class="t" style="left:1122.83px;top:418px;line-height:20px;font-size:14px;color:#000;transform:scaleX(1.05);transform-origin:0 0">8</div>
<div class="t" style="left:1153.66px;top:418px;line-height:20px;font-size:14px;color:#000;transform:scaleX(0.94);transform-origin:0 0">HM</div>
<div class="a" style="left:303px;top:443px;width:878px;height:23px;background:#f0f0f0"></div>
<div class="a" style="left:1183px;top:443px;width:37px;height:23px;background:#f0f0f0"></div>
<div class="a" style="left:302px;top:466px;width:880px;height:2px;background:#d2d2d2"></div>
<div class="a" style="left:1183px;top:466px;width:37px;height:2px;background:#808080"></div>
<div class="t" style="left:305.05px;top:443px;line-height:20px;font-size:14px;color:#000;transform:scaleX(0.95);transform-origin:0 0">H0234</div>
<div class="t" style="left:419.00px;top:443px;line-height:20px;font-size:14px;color:#000;transform:scaleX(0.89);transform-origin:0 0">AL BİBER</div>
<div class="t" style="left:767.59px;top:443px;line-height:20px;font-size:14px;color:#000;transform:scaleX(0.99);transform-origin:0 0">Kg</div>
<div class="t" style="left:837.50px;top:443px;line-height:20px;font-size:14px;color:#000;transform:scaleX(1.0);transform-origin:0 0">3,01</div>
<div class="t" style="left:905.50px;top:443px;line-height:20px;font-size:14px;color:#000;transform:scaleX(1.0);transform-origin:0 0">0,00</div>
<div class="t" style="left:944.00px;top:443px;line-height:20px;font-size:14px;color:#000;transform:scaleX(1.0);transform-origin:0 0">06.09.2018</div>
<div class="t" style="left:1028.90px;top:443px;line-height:20px;font-size:14px;color:#000;transform:scaleX(0.8);transform-origin:0 0">X</div>
<div class="t" style="left:1053.90px;top:443px;line-height:20px;font-size:14px;color:#000;transform:scaleX(0.8);transform-origin:0 0">X</div>
<div class="t" style="left:1085.33px;top:443px;line-height:20px;font-size:14px;color:#000;transform:scaleX(1.05);transform-origin:0 0">8</div>
<div class="t" style="left:1122.83px;top:443px;line-height:20px;font-size:14px;color:#000;transform:scaleX(1.05);transform-origin:0 0">8</div>
<div class="t" style="left:1153.66px;top:443px;line-height:20px;font-size:14px;color:#000;transform:scaleX(0.94);transform-origin:0 0">HM</div>
<div class="a" style="left:303px;top:468px;width:878px;height:23px;background:#ffffff"></div>
<div class="a" style="left:1183px;top:468px;width:37px;height:23px;background:#fff"></div>
<div class="a" style="left:302px;top:491px;width:880px;height:2px;background:#d2d2d2"></div>
<div class="a" style="left:1183px;top:491px;width:37px;height:2px;background:#808080"></div>
<div class="t" style="left:305.05px;top:468px;line-height:20px;font-size:14px;color:#000;transform:scaleX(0.95);transform-origin:0 0">H0386</div>
<div class="t" style="left:419.00px;top:468px;line-height:20px;font-size:14px;color:#000;transform:scaleX(0.89);transform-origin:0 0">ALABALIK</div>
<div class="t" style="left:767.59px;top:468px;line-height:20px;font-size:14px;color:#000;transform:scaleX(0.99);transform-origin:0 0">Kg</div>
<div class="t" style="left:830.50px;top:468px;line-height:20px;font-size:14px;color:#000;transform:scaleX(1.0);transform-origin:0 0">11,21</div>
<div class="t" style="left:905.50px;top:468px;line-height:20px;font-size:14px;color:#000;transform:scaleX(1.0);transform-origin:0 0">0,00</div>
<div class="t" style="left:943.50px;top:468px;line-height:20px;font-size:14px;color:#000;transform:scaleX(1.0);transform-origin:0 0">17.03.2015</div>
<div class="t" style="left:1028.90px;top:468px;line-height:20px;font-size:14px;color:#000;transform:scaleX(0.8);transform-origin:0 0">X</div>
<div class="t" style="left:1053.90px;top:468px;line-height:20px;font-size:14px;color:#000;transform:scaleX(0.8);transform-origin:0 0">X</div>
<div class="t" style="left:1085.33px;top:468px;line-height:20px;font-size:14px;color:#000;transform:scaleX(1.05);transform-origin:0 0">8</div>
<div class="t" style="left:1122.83px;top:468px;line-height:20px;font-size:14px;color:#000;transform:scaleX(1.05);transform-origin:0 0">8</div>
<div class="t" style="left:1153.66px;top:468px;line-height:20px;font-size:14px;color:#000;transform:scaleX(0.94);transform-origin:0 0">HM</div>
<div class="a" style="left:303px;top:493px;width:878px;height:23px;background:#f0f0f0"></div>
<div class="a" style="left:1183px;top:493px;width:37px;height:23px;background:#f0f0f0"></div>
<div class="a" style="left:302px;top:516px;width:880px;height:2px;background:#d2d2d2"></div>
<div class="a" style="left:1183px;top:516px;width:37px;height:2px;background:#808080"></div>
<div class="t" style="left:305.05px;top:493px;line-height:20px;font-size:14px;color:#000;transform:scaleX(0.95);transform-origin:0 0">H0643</div>
<div class="t" style="left:419.00px;top:493px;line-height:20px;font-size:14px;color:#000;transform:scaleX(0.89);transform-origin:0 0">ALABALIK FÜME</div>
<div class="t" style="left:767.59px;top:493px;line-height:20px;font-size:14px;color:#000;transform:scaleX(0.99);transform-origin:0 0">Kg</div>
<div class="t" style="left:829.50px;top:493px;line-height:20px;font-size:14px;color:#000;transform:scaleX(1.0);transform-origin:0 0">40,00</div>
<div class="t" style="left:905.50px;top:493px;line-height:20px;font-size:14px;color:#000;transform:scaleX(1.0);transform-origin:0 0">0,00</div>
<div class="t" style="left:943.50px;top:493px;line-height:20px;font-size:14px;color:#000;transform:scaleX(1.0);transform-origin:0 0">13.01.2014</div>
<div class="t" style="left:1028.90px;top:493px;line-height:20px;font-size:14px;color:#000;transform:scaleX(0.8);transform-origin:0 0">X</div>
<div class="t" style="left:1053.90px;top:493px;line-height:20px;font-size:14px;color:#000;transform:scaleX(0.8);transform-origin:0 0">X</div>
<div class="t" style="left:1085.33px;top:493px;line-height:20px;font-size:14px;color:#000;transform:scaleX(1.05);transform-origin:0 0">8</div>
<div class="t" style="left:1122.83px;top:493px;line-height:20px;font-size:14px;color:#000;transform:scaleX(1.05);transform-origin:0 0">0</div>
<div class="t" style="left:1153.66px;top:493px;line-height:20px;font-size:14px;color:#000;transform:scaleX(0.94);transform-origin:0 0">HM</div>
<div class="a" style="left:303px;top:518px;width:878px;height:23px;background:#ffffff"></div>
<div class="a" style="left:1183px;top:518px;width:37px;height:23px;background:#fff"></div>
<div class="a" style="left:302px;top:541px;width:880px;height:2px;background:#d2d2d2"></div>
<div class="a" style="left:1183px;top:541px;width:37px;height:2px;background:#808080"></div>
<div class="t" style="left:305.05px;top:518px;line-height:20px;font-size:14px;color:#000;transform:scaleX(0.95);transform-origin:0 0">H0128</div>
<div class="t" style="left:419.00px;top:518px;line-height:20px;font-size:14px;color:#000;transform:scaleX(0.89);transform-origin:0 0">ALBAYAĞ</div>
<div class="t" style="left:767.59px;top:518px;line-height:20px;font-size:14px;color:#000;transform:scaleX(0.99);transform-origin:0 0">Kg</div>
<div class="t" style="left:837.50px;top:518px;line-height:20px;font-size:14px;color:#000;transform:scaleX(1.0);transform-origin:0 0">5,83</div>
<div class="t" style="left:905.50px;top:518px;line-height:20px;font-size:14px;color:#000;transform:scaleX(1.0);transform-origin:0 0">0,00</div>
<div class="t" style="left:943.50px;top:518px;line-height:20px;font-size:14px;color:#000;transform:scaleX(1.0);transform-origin:0 0">17.08.2018</div>
<div class="t" style="left:1028.90px;top:518px;line-height:20px;font-size:14px;color:#000;transform:scaleX(0.8);transform-origin:0 0">X</div>
<div class="t" style="left:1053.90px;top:518px;line-height:20px;font-size:14px;color:#000;transform:scaleX(0.8);transform-origin:0 0">X</div>
<div class="t" style="left:1085.33px;top:518px;line-height:20px;font-size:14px;color:#000;transform:scaleX(1.05);transform-origin:0 0">8</div>
<div class="t" style="left:1122.83px;top:518px;line-height:20px;font-size:14px;color:#000;transform:scaleX(1.05);transform-origin:0 0">8</div>
<div class="t" style="left:1153.66px;top:518px;line-height:20px;font-size:14px;color:#000;transform:scaleX(0.94);transform-origin:0 0">HM</div>
<div class="a" style="left:303px;top:543px;width:878px;height:23px;background:#f0f0f0"></div>
<div class="a" style="left:1183px;top:543px;width:37px;height:23px;background:#f0f0f0"></div>
<div class="a" style="left:302px;top:566px;width:880px;height:2px;background:#d2d2d2"></div>
<div class="a" style="left:1183px;top:566px;width:37px;height:2px;background:#808080"></div>
<div class="t" style="left:305.05px;top:543px;line-height:20px;font-size:14px;color:#000;transform:scaleX(0.95);transform-origin:0 0">H0007</div>
<div class="t" style="left:419.00px;top:543px;line-height:20px;font-size:14px;color:#000;transform:scaleX(0.89);transform-origin:0 0">ANANAS</div>
<div class="t" style="left:761.64px;top:543px;line-height:20px;font-size:14px;color:#000;transform:scaleX(0.99);transform-origin:0 0">Adet</div>
<div class="t" style="left:837.50px;top:543px;line-height:20px;font-size:14px;color:#000;transform:scaleX(1.0);transform-origin:0 0">9,50</div>
<div class="t" style="left:905.50px;top:543px;line-height:20px;font-size:14px;color:#000;transform:scaleX(1.0);transform-origin:0 0">0,00</div>
<div class="t" style="left:944.00px;top:543px;line-height:20px;font-size:14px;color:#000;transform:scaleX(1.0);transform-origin:0 0">03.04.2017</div>
<div class="t" style="left:1028.90px;top:543px;line-height:20px;font-size:14px;color:#000;transform:scaleX(0.8);transform-origin:0 0">X</div>
<div class="t" style="left:1053.90px;top:543px;line-height:20px;font-size:14px;color:#000;transform:scaleX(0.8);transform-origin:0 0">X</div>
<div class="t" style="left:1085.33px;top:543px;line-height:20px;font-size:14px;color:#000;transform:scaleX(1.05);transform-origin:0 0">8</div>
<div class="t" style="left:1122.83px;top:543px;line-height:20px;font-size:14px;color:#000;transform:scaleX(1.05);transform-origin:0 0">8</div>
<div class="t" style="left:1153.66px;top:543px;line-height:20px;font-size:14px;color:#000;transform:scaleX(0.94);transform-origin:0 0">HM</div>
<div class="a" style="left:303px;top:568px;width:878px;height:23px;background:#ffffff"></div>
<div class="a" style="left:1183px;top:568px;width:37px;height:23px;background:#fff"></div>
<div class="a" style="left:302px;top:591px;width:880px;height:2px;background:#d2d2d2"></div>
<div class="a" style="left:1183px;top:591px;width:37px;height:2px;background:#808080"></div>
<div class="t" style="left:305.05px;top:568px;line-height:20px;font-size:14px;color:#000;transform:scaleX(0.95);transform-origin:0 0">H0533</div>
<div class="t" style="left:419.00px;top:568px;line-height:20px;font-size:14px;color:#000;transform:scaleX(0.89);transform-origin:0 0">ANANAS KURUSU</div>
<div class="t" style="left:767.59px;top:568px;line-height:20px;font-size:14px;color:#000;transform:scaleX(0.99);transform-origin:0 0">Kg</div>
<div class="t" style="left:829.50px;top:568px;line-height:20px;font-size:14px;color:#000;transform:scaleX(1.0);transform-origin:0 0">39,52</div>
<div class="t" style="left:905.50px;top:568px;line-height:20px;font-size:14px;color:#000;transform:scaleX(1.0);transform-origin:0 0">0,00</div>
<div class="t" style="left:943.50px;top:568px;line-height:20px;font-size:14px;color:#000;transform:scaleX(1.0);transform-origin:0 0">16.01.2015</div>
<div class="t" style="left:1028.90px;top:568px;line-height:20px;font-size:14px;color:#000;transform:scaleX(0.8);transform-origin:0 0">X</div>
<div class="t" style="left:1053.90px;top:568px;line-height:20px;font-size:14px;color:#000;transform:scaleX(0.8);transform-origin:0 0">X</div>
<div class="t" style="left:1085.33px;top:568px;line-height:20px;font-size:14px;color:#000;transform:scaleX(1.05);transform-origin:0 0">8</div>
<div class="t" style="left:1122.83px;top:568px;line-height:20px;font-size:14px;color:#000;transform:scaleX(1.05);transform-origin:0 0">8</div>
<div class="t" style="left:1153.66px;top:568px;line-height:20px;font-size:14px;color:#000;transform:scaleX(0.94);transform-origin:0 0">HM</div>
<div class="a" style="left:303px;top:593px;width:878px;height:23px;background:#f0f0f0"></div>
<div class="a" style="left:1183px;top:593px;width:37px;height:23px;background:#f0f0f0"></div>
<div class="a" style="left:302px;top:616px;width:880px;height:2px;background:#d2d2d2"></div>
<div class="a" style="left:1183px;top:616px;width:37px;height:2px;background:#808080"></div>
<div class="t" style="left:305.05px;top:593px;line-height:20px;font-size:14px;color:#000;transform:scaleX(0.95);transform-origin:0 0">H0815</div>
<div class="t" style="left:419.00px;top:593px;line-height:20px;font-size:14px;color:#000;transform:scaleX(0.89);transform-origin:0 0">ANASON</div>
<div class="t" style="left:767.59px;top:593px;line-height:20px;font-size:14px;color:#000;transform:scaleX(0.99);transform-origin:0 0">Kg</div>
<div class="t" style="left:829.50px;top:593px;line-height:20px;font-size:14px;color:#000;transform:scaleX(1.0);transform-origin:0 0">52,08</div>
<div class="t" style="left:905.50px;top:593px;line-height:20px;font-size:14px;color:#000;transform:scaleX(1.0);transform-origin:0 0">0,00</div>
<div class="t" style="left:943.50px;top:593px;line-height:20px;font-size:14px;color:#000;transform:scaleX(1.0);transform-origin:0 0">17.12.2017</div>
<div class="t" style="left:1028.90px;top:593px;line-height:20px;font-size:14px;color:#000;transform:scaleX(0.8);transform-origin:0 0">X</div>
<div class="t" style="left:1053.90px;top:593px;line-height:20px;font-size:14px;color:#000;transform:scaleX(0.8);transform-origin:0 0">X</div>
<div class="t" style="left:1080.60px;top:593px;line-height:20px;font-size:14px;color:#000;transform:scaleX(1.05);transform-origin:0 0">18</div>
<div class="t" style="left:1118.10px;top:593px;line-height:20px;font-size:14px;color:#000;transform:scaleX(1.05);transform-origin:0 0">18</div>
<div class="t" style="left:1153.66px;top:593px;line-height:20px;font-size:14px;color:#000;transform:scaleX(0.94);transform-origin:0 0">HM</div>
<div class="a" style="left:303px;top:618px;width:878px;height:23px;background:#ffffff"></div>
<div class="a" style="left:1183px;top:618px;width:37px;height:23px;background:#fff"></div>
<div class="a" style="left:302px;top:641px;width:880px;height:2px;background:#d2d2d2"></div>
<div class="a" style="left:1183px;top:641px;width:37px;height:2px;background:#808080"></div>
<div class="t" style="left:305.05px;top:618px;line-height:20px;font-size:14px;color:#000;transform:scaleX(0.95);transform-origin:0 0">H0323</div>
<div class="t" style="left:419.00px;top:618px;line-height:20px;font-size:14px;color:#000;transform:scaleX(0.89);transform-origin:0 0">ANÇUEZ</div>
<div class="t" style="left:761.64px;top:618px;line-height:20px;font-size:14px;color:#000;transform:scaleX(0.99);transform-origin:0 0">Adet</div>
<div class="t" style="left:837.50px;top:618px;line-height:20px;font-size:14px;color:#000;transform:scaleX(1.0);transform-origin:0 0">0,00</div>
<div class="t" style="left:905.50px;top:618px;line-height:20px;font-size:14px;color:#000;transform:scaleX(1.0);transform-origin:0 0">0,00</div>
<div class="t" style="left:943.50px;top:618px;line-height:20px;font-size:14px;color:#000;transform:scaleX(1.0);transform-origin:0 0">21.01.2010</div>
<div class="t" style="left:1028.90px;top:618px;line-height:20px;font-size:14px;color:#000;transform:scaleX(0.8);transform-origin:0 0">X</div>
<div class="t" style="left:1053.90px;top:618px;line-height:20px;font-size:14px;color:#000;transform:scaleX(0.8);transform-origin:0 0">X</div>
<div class="t" style="left:1085.33px;top:618px;line-height:20px;font-size:14px;color:#000;transform:scaleX(1.05);transform-origin:0 0">8</div>
<div class="t" style="left:1122.83px;top:618px;line-height:20px;font-size:14px;color:#000;transform:scaleX(1.05);transform-origin:0 0">8</div>
<div class="t" style="left:1153.66px;top:618px;line-height:20px;font-size:14px;color:#000;transform:scaleX(0.94);transform-origin:0 0">HM</div>
<div class="a" style="left:303px;top:643px;width:878px;height:23px;background:#f0f0f0"></div>
<div class="a" style="left:1183px;top:643px;width:37px;height:23px;background:#f0f0f0"></div>
<div class="a" style="left:302px;top:666px;width:880px;height:2px;background:#d2d2d2"></div>
<div class="a" style="left:1183px;top:666px;width:37px;height:2px;background:#808080"></div>
<div class="t" style="left:305.05px;top:643px;line-height:20px;font-size:14px;color:#000;transform:scaleX(0.95);transform-origin:0 0">H0307</div>
<div class="t" style="left:419.00px;top:643px;line-height:20px;font-size:14px;color:#000;transform:scaleX(0.89);transform-origin:0 0">ANÇÜEZ ÖZEL</div>
<div class="t" style="left:762.14px;top:643px;line-height:20px;font-size:14px;color:#000;transform:scaleX(0.99);transform-origin:0 0">Şişe</div>
<div class="t" style="left:829.50px;top:643px;line-height:20px;font-size:14px;color:#000;transform:scaleX(1.0);transform-origin:0 0">53,06</div>
<div class="t" style="left:905.50px;top:643px;line-height:20px;font-size:14px;color:#000;transform:scaleX(1.0);transform-origin:0 0">0,00</div>
<div class="t" style="left:944.00px;top:643px;line-height:20px;font-size:14px;color:#000;transform:scaleX(1.0);transform-origin:0 0">06.06.2014</div>
<div class="t" style="left:1028.90px;top:643px;line-height:20px;font-size:14px;color:#000;transform:scaleX(0.8);transform-origin:0 0">X</div>
<div class="t" style="left:1053.90px;top:643px;line-height:20px;font-size:14px;color:#000;transform:scaleX(0.8);transform-origin:0 0">X</div>
<div class="t" style="left:1085.33px;top:643px;line-height:20px;font-size:14px;color:#000;transform:scaleX(1.05);transform-origin:0 0">8</div>
<div class="t" style="left:1122.83px;top:643px;line-height:20px;font-size:14px;color:#000;transform:scaleX(1.05);transform-origin:0 0">8</div>
<div class="t" style="left:1153.66px;top:643px;line-height:20px;font-size:14px;color:#000;transform:scaleX(0.94);transform-origin:0 0">HM</div>
<div class="a" style="left:303px;top:668px;width:878px;height:23px;background:#ffffff"></div>
<div class="a" style="left:1183px;top:668px;width:37px;height:23px;background:#fff"></div>
<div class="a" style="left:302px;top:691px;width:880px;height:2px;background:#d2d2d2"></div>
<div class="a" style="left:1183px;top:691px;width:37px;height:2px;background:#808080"></div>
<div class="t" style="left:305.05px;top:668px;line-height:20px;font-size:14px;color:#000;transform:scaleX(0.95);transform-origin:0 0">H0824</div>
<div class="t" style="left:419.00px;top:668px;line-height:20px;font-size:14px;color:#000;transform:scaleX(0.89);transform-origin:0 0">ANTEP DOLMA HAZIR</div>
<div class="t" style="left:767.59px;top:668px;line-height:20px;font-size:14px;color:#000;transform:scaleX(0.99);transform-origin:0 0">Kg</div>
<div class="t" style="left:829.50px;top:668px;line-height:20px;font-size:14px;color:#000;transform:scaleX(1.0);transform-origin:0 0">20,50</div>
<div class="t" style="left:905.50px;top:668px;line-height:20px;font-size:14px;color:#000;transform:scaleX(1.0);transform-origin:0 0">0,00</div>
<div class="t" style="left:943.50px;top:668px;line-height:20px;font-size:14px;color:#000;transform:scaleX(1.0);transform-origin:0 0">14.03.2018</div>
<div class="t" style="left:1028.90px;top:668px;line-height:20px;font-size:14px;color:#000;transform:scaleX(0.8);transform-origin:0 0">X</div>
<div class="t" style="left:1053.90px;top:668px;line-height:20px;font-size:14px;color:#000;transform:scaleX(0.8);transform-origin:0 0">X</div>
<div class="t" style="left:1085.33px;top:668px;line-height:20px;font-size:14px;color:#000;transform:scaleX(1.05);transform-origin:0 0">8</div>
<div class="t" style="left:1122.83px;top:668px;line-height:20px;font-size:14px;color:#000;transform:scaleX(1.05);transform-origin:0 0">8</div>
<div class="t" style="left:1153.66px;top:668px;line-height:20px;font-size:14px;color:#000;transform:scaleX(0.94);transform-origin:0 0">HM</div>
<div class="a" style="left:303px;top:693px;width:878px;height:23px;background:#f0f0f0"></div>
<div class="a" style="left:1183px;top:693px;width:37px;height:23px;background:#f0f0f0"></div>
<div class="a" style="left:302px;top:716px;width:880px;height:2px;background:#d2d2d2"></div>
<div class="a" style="left:1183px;top:716px;width:37px;height:2px;background:#808080"></div>
<div class="t" style="left:305.05px;top:693px;line-height:20px;font-size:14px;color:#000;transform:scaleX(0.95);transform-origin:0 0">H0714</div>
<div class="t" style="left:419.00px;top:693px;line-height:20px;font-size:14px;color:#000;transform:scaleX(0.89);transform-origin:0 0">ANTEP DOLMA HAZIR</div>
<div class="t" style="left:767.59px;top:693px;line-height:20px;font-size:14px;color:#000;transform:scaleX(0.99);transform-origin:0 0">Kg</div>
<div class="t" style="left:829.50px;top:693px;line-height:20px;font-size:14px;color:#000;transform:scaleX(1.0);transform-origin:0 0">16,52</div>
<div class="t" style="left:905.50px;top:693px;line-height:20px;font-size:14px;color:#000;transform:scaleX(1.0);transform-origin:0 0">0,00</div>
<div class="t" style="left:943.50px;top:693px;line-height:20px;font-size:14px;color:#000;transform:scaleX(1.0);transform-origin:0 0">10.06.2015</div>
<div class="t" style="left:1028.90px;top:693px;line-height:20px;font-size:14px;color:#000;transform:scaleX(0.8);transform-origin:0 0">X</div>
<div class="t" style="left:1053.90px;top:693px;line-height:20px;font-size:14px;color:#000;transform:scaleX(0.8);transform-origin:0 0">X</div>
<div class="t" style="left:1085.33px;top:693px;line-height:20px;font-size:14px;color:#000;transform:scaleX(1.05);transform-origin:0 0">8</div>
<div class="t" style="left:1122.83px;top:693px;line-height:20px;font-size:14px;color:#000;transform:scaleX(1.05);transform-origin:0 0">0</div>
<div class="t" style="left:1153.66px;top:693px;line-height:20px;font-size:14px;color:#000;transform:scaleX(0.94);transform-origin:0 0">HM</div>
<div class="a" style="left:303px;top:718px;width:878px;height:23px;background:#ffffff"></div>
<div class="a" style="left:1183px;top:718px;width:37px;height:23px;background:#fff"></div>
<div class="a" style="left:302px;top:741px;width:880px;height:2px;background:#d2d2d2"></div>
<div class="a" style="left:1183px;top:741px;width:37px;height:2px;background:#808080"></div>
<div class="t" style="left:305.05px;top:718px;line-height:20px;font-size:14px;color:#000;transform:scaleX(0.95);transform-origin:0 0">H0448</div>
<div class="t" style="left:419.00px;top:718px;line-height:20px;font-size:14px;color:#000;transform:scaleX(0.89);transform-origin:0 0">ANTEP FIST.KABUKLU</div>
<div class="t" style="left:767.59px;top:718px;line-height:20px;font-size:14px;color:#000;transform:scaleX(0.99);transform-origin:0 0">Kg</div>
<div class="t" style="left:829.50px;top:718px;line-height:20px;font-size:14px;color:#000;transform:scaleX(1.0);transform-origin:0 0">17,90</div>
<div class="t" style="left:905.50px;top:718px;line-height:20px;font-size:14px;color:#000;transform:scaleX(1.0);transform-origin:0 0">0,00</div>
<div class="t" style="left:944.00px;top:718px;line-height:20px;font-size:14px;color:#000;transform:scaleX(1.0);transform-origin:0 0">02.12.2010</div>
<div class="t" style="left:1028.90px;top:718px;line-height:20px;font-size:14px;color:#000;transform:scaleX(0.8);transform-origin:0 0">X</div>
<div class="t" style="left:1053.90px;top:718px;line-height:20px;font-size:14px;color:#000;transform:scaleX(0.8);transform-origin:0 0">X</div>
<div class="t" style="left:1085.33px;top:718px;line-height:20px;font-size:14px;color:#000;transform:scaleX(1.05);transform-origin:0 0">8</div>
<div class="t" style="left:1122.83px;top:718px;line-height:20px;font-size:14px;color:#000;transform:scaleX(1.05);transform-origin:0 0">8</div>
<div class="t" style="left:1153.66px;top:718px;line-height:20px;font-size:14px;color:#000;transform:scaleX(0.94);transform-origin:0 0">HM</div>
<div class="a" style="left:303px;top:743px;width:878px;height:23px;background:#f0f0f0"></div>
<div class="a" style="left:1183px;top:743px;width:37px;height:23px;background:#f0f0f0"></div>
<div class="a" style="left:302px;top:766px;width:880px;height:2px;background:#d2d2d2"></div>
<div class="a" style="left:1183px;top:766px;width:37px;height:2px;background:#808080"></div>
<div class="t" style="left:305.05px;top:743px;line-height:20px;font-size:14px;color:#000;transform:scaleX(0.95);transform-origin:0 0">H0187</div>
<div class="t" style="left:419.00px;top:743px;line-height:20px;font-size:14px;color:#000;transform:scaleX(0.89);transform-origin:0 0">ANTEP FISTIĞI İÇ</div>
<div class="t" style="left:767.59px;top:743px;line-height:20px;font-size:14px;color:#000;transform:scaleX(0.99);transform-origin:0 0">Kg</div>
<div class="t" style="left:822.50px;top:743px;line-height:20px;font-size:14px;color:#000;transform:scaleX(1.0);transform-origin:0 0">130,00</div>
<div class="t" style="left:905.50px;top:743px;line-height:20px;font-size:14px;color:#000;transform:scaleX(1.0);transform-origin:0 0">0,00</div>
<div class="t" style="left:943.50px;top:743px;line-height:20px;font-size:14px;color:#000;transform:scaleX(1.0);transform-origin:0 0">20.04.2017</div>
<div class="t" style="left:1028.90px;top:743px;line-height:20px;font-size:14px;color:#000;transform:scaleX(0.8);transform-origin:0 0">X</div>
<div class="t" style="left:1053.90px;top:743px;line-height:20px;font-size:14px;color:#000;transform:scaleX(0.8);transform-origin:0 0">X</div>
<div class="t" style="left:1085.33px;top:743px;line-height:20px;font-size:14px;color:#000;transform:scaleX(1.05);transform-origin:0 0">8</div>
<div class="t" style="left:1122.30px;top:743px;line-height:20px;font-size:14px;color:#000;transform:scaleX(1.05);transform-origin:0 0">1</div>
<div class="t" style="left:1153.66px;top:743px;line-height:20px;font-size:14px;color:#000;transform:scaleX(0.94);transform-origin:0 0">HM</div>
<div class="a" style="left:303px;top:768px;width:878px;height:23px;background:#ffffff"></div>
<div class="a" style="left:1183px;top:768px;width:37px;height:23px;background:#fff"></div>
<div class="a" style="left:302px;top:791px;width:880px;height:2px;background:#d2d2d2"></div>
<div class="a" style="left:1183px;top:791px;width:37px;height:2px;background:#808080"></div>
<div class="t" style="left:305.05px;top:768px;line-height:20px;font-size:14px;color:#000;transform:scaleX(0.95);transform-origin:0 0">H0243</div>
<div class="t" style="left:419.00px;top:768px;line-height:20px;font-size:14px;color:#000;transform:scaleX(0.89);transform-origin:0 0">ANTEP FISTIĞI TOZ</div>
<div class="t" style="left:767.59px;top:768px;line-height:20px;font-size:14px;color:#000;transform:scaleX(0.99);transform-origin:0 0">Kg</div>
<div class="t" style="left:821.50px;top:768px;line-height:20px;font-size:14px;color:#000;transform:scaleX(1.0);transform-origin:0 0">138,24</div>
<div class="t" style="left:905.50px;top:768px;line-height:20px;font-size:14px;color:#000;transform:scaleX(1.0);transform-origin:0 0">0,00</div>
<div class="t" style="left:944.00px;top:768px;line-height:20px;font-size:14px;color:#000;transform:scaleX(1.0);transform-origin:0 0">06.07.2018</div>
<div class="t" style="left:1028.90px;top:768px;line-height:20px;font-size:14px;color:#000;transform:scaleX(0.8);transform-origin:0 0">X</div>
<div class="t" style="left:1053.90px;top:768px;line-height:20px;font-size:14px;color:#000;transform:scaleX(0.8);transform-origin:0 0">X</div>
<div class="t" style="left:1084.80px;top:768px;line-height:20px;font-size:14px;color:#000;transform:scaleX(1.05);transform-origin:0 0">1</div>
<div class="t" style="left:1122.30px;top:768px;line-height:20px;font-size:14px;color:#000;transform:scaleX(1.05);transform-origin:0 0">1</div>
<div class="t" style="left:1153.66px;top:768px;line-height:20px;font-size:14px;color:#000;transform:scaleX(0.94);transform-origin:0 0">HM</div>
<div class="a" style="left:303px;top:793px;width:878px;height:23px;background:#f0f0f0"></div>
<div class="a" style="left:1183px;top:793px;width:37px;height:23px;background:#f0f0f0"></div>
<div class="a" style="left:302px;top:816px;width:880px;height:2px;background:#d2d2d2"></div>
<div class="a" style="left:1183px;top:816px;width:37px;height:2px;background:#808080"></div>
<div class="t" style="left:305.05px;top:793px;line-height:20px;font-size:14px;color:#000;transform:scaleX(0.95);transform-origin:0 0">H0820</div>
<div class="t" style="left:419.00px;top:793px;line-height:20px;font-size:14px;color:#000;transform:scaleX(0.89);transform-origin:0 0">ANTEP FISTIĞI TOZ ÖZEL</div>
<div class="t" style="left:767.59px;top:793px;line-height:20px;font-size:14px;color:#000;transform:scaleX(0.99);transform-origin:0 0">Kg</div>
<div class="t" style="left:822.50px;top:793px;line-height:20px;font-size:14px;color:#000;transform:scaleX(1.0);transform-origin:0 0">147,78</div>
<div class="t" style="left:905.50px;top:793px;line-height:20px;font-size:14px;color:#000;transform:scaleX(1.0);transform-origin:0 0">0,00</div>
<div class="t" style="left:943.50px;top:793px;line-height:20px;font-size:14px;color:#000;transform:scaleX(1.0);transform-origin:0 0">26.02.2018</div>
<div class="t" style="left:1028.90px;top:793px;line-height:20px;font-size:14px;color:#000;transform:scaleX(0.8);transform-origin:0 0">X</div>
<div class="t" style="left:1053.90px;top:793px;line-height:20px;font-size:14px;color:#000;transform:scaleX(0.8);transform-origin:0 0">X</div>
<div class="t" style="left:1085.33px;top:793px;line-height:20px;font-size:14px;color:#000;transform:scaleX(1.05);transform-origin:0 0">8</div>
<div class="t" style="left:1122.83px;top:793px;line-height:20px;font-size:14px;color:#000;transform:scaleX(1.05);transform-origin:0 0">8</div>
<div class="t" style="left:1153.66px;top:793px;line-height:20px;font-size:14px;color:#000;transform:scaleX(0.94);transform-origin:0 0">HM</div>
<div class="a" style="left:303px;top:818px;width:878px;height:23px;background:#ffffff"></div>
<div class="a" style="left:1183px;top:818px;width:37px;height:23px;background:#fff"></div>
<div class="a" style="left:302px;top:841px;width:880px;height:2px;background:#d2d2d2"></div>
<div class="a" style="left:1183px;top:841px;width:37px;height:2px;background:#808080"></div>
<div class="t" style="left:305.05px;top:818px;line-height:20px;font-size:14px;color:#000;transform:scaleX(0.95);transform-origin:0 0">H0066</div>
<div class="t" style="left:419.00px;top:818px;line-height:20px;font-size:14px;color:#000;transform:scaleX(0.89);transform-origin:0 0">ANTEP FISTIK FİLE</div>
<div class="t" style="left:767.59px;top:818px;line-height:20px;font-size:14px;color:#000;transform:scaleX(0.99);transform-origin:0 0">Kg</div>
<div class="t" style="left:822.50px;top:818px;line-height:20px;font-size:14px;color:#000;transform:scaleX(1.0);transform-origin:0 0">124,20</div>
<div class="t" style="left:905.50px;top:818px;line-height:20px;font-size:14px;color:#000;transform:scaleX(1.0);transform-origin:0 0">0,00</div>
<div class="t" style="left:943.50px;top:818px;line-height:20px;font-size:14px;color:#000;transform:scaleX(1.0);transform-origin:0 0">27.07.2018</div>
<div class="t" style="left:1028.90px;top:818px;line-height:20px;font-size:14px;color:#000;transform:scaleX(0.8);transform-origin:0 0">X</div>
<div class="t" style="left:1053.90px;top:818px;line-height:20px;font-size:14px;color:#000;transform:scaleX(0.8);transform-origin:0 0">X</div>
<div class="t" style="left:1084.80px;top:818px;line-height:20px;font-size:14px;color:#000;transform:scaleX(1.05);transform-origin:0 0">1</div>
<div class="t" style="left:1122.30px;top:818px;line-height:20px;font-size:14px;color:#000;transform:scaleX(1.05);transform-origin:0 0">1</div>
<div class="t" style="left:1153.66px;top:818px;line-height:20px;font-size:14px;color:#000;transform:scaleX(0.94);transform-origin:0 0">HM</div>
<div class="a" style="left:303px;top:843px;width:878px;height:20px;background:#f0f0f0"></div>
<div class="a" style="left:1183px;top:843px;width:37px;height:20px;background:#f0f0f0"></div>
<div class="t" style="left:305.05px;top:843px;line-height:20px;font-size:14px;color:#000;transform:scaleX(0.95);transform-origin:0 0">H0410</div>
<div class="t" style="left:419.00px;top:843px;line-height:20px;font-size:14px;color:#000;transform:scaleX(0.89);transform-origin:0 0">ANTEP İÇ ÖZEL</div>
<div class="t" style="left:767.59px;top:843px;line-height:20px;font-size:14px;color:#000;transform:scaleX(0.99);transform-origin:0 0">Kg</div>
<div class="t" style="left:822.50px;top:843px;line-height:20px;font-size:14px;color:#000;transform:scaleX(1.0);transform-origin:0 0">165,00</div>
<div class="t" style="left:905.50px;top:843px;line-height:20px;font-size:14px;color:#000;transform:scaleX(1.0);transform-origin:0 0">0,00</div>
<div class="t" style="left:943.50px;top:843px;line-height:20px;font-size:14px;color:#000;transform:scaleX(1.0);transform-origin:0 0">27.08.2018</div>
<div class="t" style="left:1028.90px;top:843px;line-height:20px;font-size:14px;color:#000;transform:scaleX(0.8);transform-origin:0 0">X</div>
<div class="t" style="left:1053.90px;top:843px;line-height:20px;font-size:14px;color:#000;transform:scaleX(0.8);transform-origin:0 0">X</div>
<div class="t" style="left:1085.33px;top:843px;line-height:20px;font-size:14px;color:#000;transform:scaleX(1.05);transform-origin:0 0">8</div>
<div class="t" style="left:1122.83px;top:843px;line-height:20px;font-size:14px;color:#000;transform:scaleX(1.05);transform-origin:0 0">8</div>
<div class="t" style="left:1153.66px;top:843px;line-height:20px;font-size:14px;color:#000;transform:scaleX(0.94);transform-origin:0 0">HM</div>
<div class="a" style="left:412px;top:217px;width:1px;height:646px;background:#c4c4c4"></div>
<div class="a" style="left:413px;top:217px;width:1px;height:646px;background:#dcdcdc"></div>
<div class="a" style="left:750px;top:217px;width:1px;height:646px;background:#c4c4c4"></div>
<div class="a" style="left:751px;top:217px;width:1px;height:646px;background:#dcdcdc"></div>
<div class="a" style="left:800px;top:217px;width:1px;height:646px;background:#c4c4c4"></div>
<div class="a" style="left:801px;top:217px;width:1px;height:646px;background:#dcdcdc"></div>
<div class="a" style="left:869px;top:217px;width:1px;height:646px;background:#c4c4c4"></div>
<div class="a" style="left:870px;top:217px;width:1px;height:646px;background:#dcdcdc"></div>
<div class="a" style="left:937px;top:217px;width:1px;height:646px;background:#c4c4c4"></div>
<div class="a" style="left:938px;top:217px;width:1px;height:646px;background:#dcdcdc"></div>
<div class="a" style="left:1019px;top:217px;width:1px;height:646px;background:#c4c4c4"></div>
<div class="a" style="left:1020px;top:217px;width:1px;height:646px;background:#dcdcdc"></div>
<div class="a" style="left:1044px;top:217px;width:1px;height:646px;background:#c4c4c4"></div>
<div class="a" style="left:1045px;top:217px;width:1px;height:646px;background:#dcdcdc"></div>
<div class="a" style="left:1069px;top:217px;width:1px;height:646px;background:#c4c4c4"></div>
<div class="a" style="left:1070px;top:217px;width:1px;height:646px;background:#dcdcdc"></div>
<div class="a" style="left:1107px;top:217px;width:1px;height:646px;background:#c4c4c4"></div>
<div class="a" style="left:1108px;top:217px;width:1px;height:646px;background:#dcdcdc"></div>
<div class="a" style="left:1145px;top:217px;width:1px;height:646px;background:#c4c4c4"></div>
<div class="a" style="left:1146px;top:217px;width:1px;height:646px;background:#dcdcdc"></div>
<div class="a" style="left:1182px;top:217px;width:1px;height:646px;background:#c4c4c4"></div>
<div class="a" style="left:1183px;top:217px;width:1px;height:646px;background:#dcdcdc"></div>
<div class="a" style="left:304px;top:219px;width:876px;height:1px;background:repeating-linear-gradient(90deg,#111 0 1px,#e8e8f0 1px 2px,#606070 2px 4px,#e8e8f0 4px 5px)"></div>
<div class="a" style="left:304px;top:239px;width:876px;height:1px;background:repeating-linear-gradient(90deg,#111 0 1px,#e8e8f0 1px 2px,#606070 2px 4px,#e8e8f0 4px 5px)"></div>
<div class="a" style="left:1179px;top:219px;width:1px;height:21px;background:repeating-linear-gradient(180deg,#111 0 1px,#e8e8f0 1px 2px,#606070 2px 4px,#e8e8f0 4px 5px)"></div>
<div class="a" style="left:302px;top:240px;width:879px;height:1px;background:#fafafa"></div>
<div class="a" style="left:302px;top:217px;width:879px;height:2px;background:#f4f4fc"></div>
<div class="a" style="left:1221px;top:191px;width:20px;height:672px;background:#f0f0f0"></div>
<div class="a" style="left:1221px;top:213px;width:20px;height:21px;background:#cdcdcd"></div>
<svg class="a" style="left:1225px;top:197px" width="12" height="10" viewBox="0 0 12 10"><path d="M1.5 8 L6 3.5 L10.5 8" fill="none" stroke="#606060" stroke-width="2.2"/></svg>
<svg class="a" style="left:1225px;top:848px" width="12" height="10" viewBox="0 0 12 10"><path d="M1.5 2 L6 6.5 L10.5 2" fill="none" stroke="#606060" stroke-width="2.2"/></svg>
<div class="t" style="left:353.19px;top:54px;font-size:14px;line-height:20px;font-weight:bold;color:#000;transform:scaleX(1.2094);transform-origin:0 0">Ürün Ekle</div>
<div class="t" style="left:350.60px;top:70px;font-size:14px;line-height:20px;font-weight:bold;color:#000;transform:scaleX(1.1986);transform-origin:0 0">(CTRL+F2)</div>
<div class="t" style="left:500.77px;top:54px;font-size:14px;line-height:20px;font-weight:bold;color:#000;transform:scaleX(1.2294);transform-origin:0 0">Değiştir</div>
<div class="t" style="left:515.29px;top:70px;font-size:14px;line-height:20px;font-weight:bold;color:#000;transform:scaleX(1.4125);transform-origin:0 0">(F3)</div>
<div class="t" style="left:643.90px;top:62px;font-size:14px;line-height:20px;font-weight:bold;color:#000;transform:scaleX(1.2804);transform-origin:0 0">Sil (F4)</div>
<div class="t" style="left:783.41px;top:54px;font-size:14px;line-height:20px;font-weight:bold;color:#000;transform:scaleX(1.1859);transform-origin:0 0">Ürünün Önceki</div>
<div class="t" style="left:791.80px;top:70px;font-size:14px;line-height:20px;font-weight:bold;color:#000;transform:scaleX(1.2646);transform-origin:0 0">Girişleri (F8)</div>
<div class="t" style="left:965.58px;top:54px;font-size:14px;line-height:20px;font-weight:bold;color:#000;transform:scaleX(1.2237);transform-origin:0 0">Kullanılmayan</div>
<div class="t" style="left:968.46px;top:70px;font-size:14px;line-height:20px;font-weight:bold;color:#000;transform:scaleX(1.2364);transform-origin:0 0">Barkodları Sil</div>
<div class="t" style="left:1169.20px;top:54px;font-size:14px;line-height:20px;font-weight:bold;color:#000;transform:scaleX(1.1636);transform-origin:0 0">Çıkış</div>
<div class="t" style="left:1165.45px;top:70px;font-size:14px;line-height:20px;font-weight:bold;color:#000;transform:scaleX(1.3500);transform-origin:0 0">(F12)</div>
<div class="t" style="left:358.11px;top:114px;font-size:14px;line-height:20px;font-weight:bold;color:#000;transform:scaleX(1.1877);transform-origin:0 0">Ürün Bul</div>
<div class="t" style="left:375.28px;top:130px;font-size:14px;line-height:20px;font-weight:bold;color:#000;transform:scaleX(1.4208);transform-origin:0 0">(F5)</div>
<div class="t" style="left:809.39px;top:114px;font-size:14px;line-height:20px;font-weight:bold;color:#000;transform:scaleX(1.2055);transform-origin:0 0">Barkodu</div>
<div class="t" style="left:810.06px;top:130px;font-size:14px;line-height:20px;font-weight:bold;color:#000;transform:scaleX(1.2431);transform-origin:0 0">Değiştir</div>
<div class="t" style="left:958.20px;top:121px;font-size:14px;line-height:20px;font-weight:bold;color:#000;transform:scaleX(1.1890);transform-origin:0 0">Yazdır (CTRL+P)</div>
<div class="t" style="left:28.30px;top:759px;font-size:14px;line-height:20px;font-weight:bold;color:#000;transform:scaleX(1.1773);transform-origin:0 0">Yeni Grup</div>
<div class="t" style="left:56.00px;top:775px;font-size:14px;line-height:20px;font-weight:bold;color:#000;transform:scaleX(1.2000);transform-origin:0 0">Aç</div>
<div class="t" style="left:190.50px;top:759px;font-size:14px;line-height:20px;font-weight:bold;color:#000;transform:scaleX(1.1620);transform-origin:0 0">Grup Bilgisi</div>
<div class="t" style="left:202.55px;top:775px;font-size:14px;line-height:20px;font-weight:bold;color:#000;transform:scaleX(1.2471);transform-origin:0 0">Değiştir</div>
<div class="t" style="left:31.00px;top:848px;font-size:14px;line-height:20px;font-weight:bold;color:#000;transform:scaleX(1.1613);transform-origin:0 0">Grubu Sil</div>
<div class="t" style="left:107.19px;top:36px;font-size:14px;line-height:20px;font-weight:bold;color:#fff;transform:scaleX(1.2111);transform-origin:0 0">Ürün Ağacı</div>
<div class="t" style="left:704.40px;top:165px;font-size:14px;line-height:20px;font-weight:bold;color:#fff;transform:scaleX(1.2198);transform-origin:0 0">Gruptaki Ürünler</div>
<div class="t" style="left:309.56px;top:194px;font-size:14px;line-height:20px;font-weight:bold;color:#000;transform:scaleX(1.0400);transform-origin:0 0">Barkodu</div>
<div class="t" style="left:422.15px;top:194px;font-size:14px;line-height:20px;font-weight:bold;color:#000;transform:scaleX(1.0509);transform-origin:0 0">Ürün Adı</div>
<div class="t" style="left:759.50px;top:194px;font-size:14px;line-height:20px;font-weight:bold;color:#000;transform:scaleX(1.0030);transform-origin:0 0">Biri...</div>
<div class="t" style="left:810.40px;top:194px;font-size:14px;line-height:20px;font-weight:bold;color:#000;transform:scaleX(0.9882);transform-origin:0 0">Son A...</div>
<div class="t" style="left:878.90px;top:194px;font-size:14px;line-height:20px;font-weight:bold;color:#000;transform:scaleX(0.9784);transform-origin:0 0">Son S...</div>
<div class="t" style="left:947.30px;top:194px;font-size:14px;line-height:20px;font-weight:bold;color:#000;transform:scaleX(1.0460);transform-origin:0 0">Son Tarih</div>
<div class="t" style="left:1027.36px;top:194px;font-size:14px;line-height:20px;font-weight:bold;color:#000;transform:scaleX(1.2417);transform-origin:0 0">H.</div>
<div class="t" style="left:1053.50px;top:194px;font-size:14px;line-height:20px;font-weight:bold;color:#000;transform:scaleX(0.9375);transform-origin:0 0">S..</div>
<div class="t" style="left:1079.00px;top:194px;font-size:14px;line-height:20px;font-weight:bold;color:#000;transform:scaleX(0.9905);transform-origin:0 0">A...</div>
<div class="t" style="left:1116.20px;top:194px;font-size:14px;line-height:20px;font-weight:bold;color:#000;transform:scaleX(0.9900);transform-origin:0 0">S...</div>
<div class="t" style="left:1153.50px;top:194px;font-size:14px;line-height:20px;font-weight:bold;color:#000;transform:scaleX(1.0944);transform-origin:0 0">T...</div>
<div class="t" style="left:35.00px;top:64px;font-size:14px;line-height:20px;font-weight:bold;color:#000;transform:scaleX(1.1460);transform-origin:0 0">TANIMSIZ ÜRÜNLER</div>
<div class="t" style="left:35.00px;top:84px;font-size:14px;line-height:20px;font-weight:bold;color:#000;transform:scaleX(1.0892);transform-origin:0 0">TÜM ÜRÜNLER</div>
<div class="t" style="left:33.89px;top:104px;font-size:14px;line-height:20px;font-weight:bold;color:#000;transform:scaleX(1.1052);transform-origin:0 0">ÜRÜN GRUPLARI</div>
<div class="t" style="left:56.10px;top:124px;font-size:14px;line-height:20px;font-weight:bold;color:#fff;transform:scaleX(1.0951);transform-origin:0 0">HAMMADDE</div>
<div class="t" style="left:55.50px;top:144px;font-size:14px;line-height:20px;font-weight:bold;color:#000;transform:scaleX(1.1449);transform-origin:0 0">AL SAT</div>
<div class="t" style="left:55.33px;top:164px;font-size:14px;line-height:20px;font-weight:bold;color:#000;transform:scaleX(1.1712);transform-origin:0 0">İŞLETME GİDERİ</div>
<div class="t" style="left:55.36px;top:184px;font-size:14px;line-height:20px;font-weight:bold;color:#000;transform:scaleX(1.1393);transform-origin:0 0">İŞ OCAKLARI</div>
</body></html>
